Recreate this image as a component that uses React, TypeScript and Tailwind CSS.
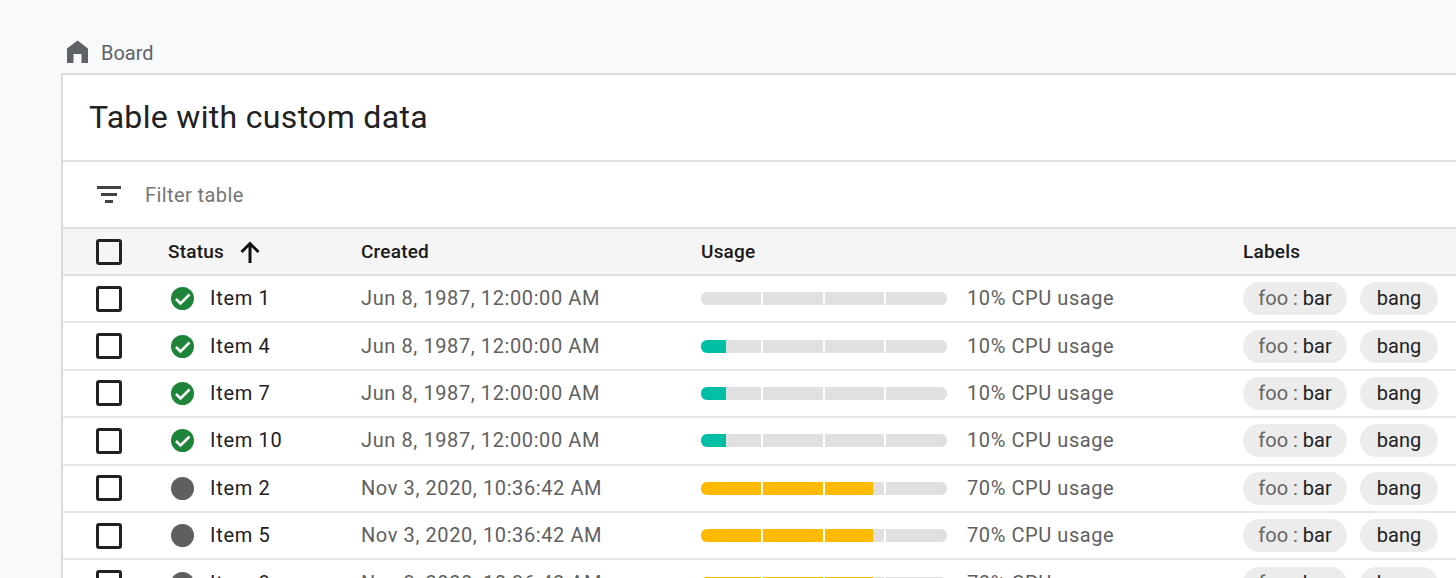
const rows = [
  { name: "Item 1", done: true, created: "Jun 8, 1987, 12:00:00 AM", usage: 0, text: "10% CPU usage" },
  { name: "Item 4", done: true, created: "Jun 8, 1987, 12:00:00 AM", usage: 10, text: "10% CPU usage" },
  { name: "Item 7", done: true, created: "Jun 8, 1987, 12:00:00 AM", usage: 10, text: "10% CPU usage" },
  { name: "Item 10", done: true, created: "Jun 8, 1987, 12:00:00 AM", usage: 10, text: "10% CPU usage" },
  { name: "Item 2", done: false, created: "Nov 3, 2020, 10:36:42 AM", usage: 70, text: "70% CPU usage" },
  { name: "Item 5", done: false, created: "Nov 3, 2020, 10:36:42 AM", usage: 70, text: "70% CPU usage" },
  { name: "Item 8", done: false, created: "Nov 3, 2020, 10:36:42 AM", usage: 70, text: "70% CPU usage" },
];

const columns = "grid grid-cols-[105px_193px_340px_542px_1fr] items-center";

function Checkbox() {
  return <div className="ml-[33px] size-[26px] rounded-[3px] border-[3px] border-[#212121]" />;
}

function StatusIcon({ done }: { done: boolean }) {
  if (!done) return <div className="size-[23px] rounded-full bg-[#5f5f5f]" />;
  return (
    <svg viewBox="0 0 23 23" className="size-[23px]">
      <circle cx="11.5" cy="11.5" r="11.5" fill="#1e8439" />
      <path d="M5 12l4.5 4.5L18.5 7.5" fill="none" stroke="#fff" strokeWidth="2.6" />
    </svg>
  );
}

function UsageBar({ value }: { value: number }) {
  return (
    <div className="relative h-[13px] w-[246px] overflow-hidden rounded-[6px] bg-[#e0e0e0]">
      <div
        className={`h-full ${value > 50 ? "bg-[#ffba00]" : "bg-[#00bfa5]"}`}
        style={{ width: `${value}%` }}
      />
      <div className="absolute inset-0 flex">
        <div className="w-[62px] border-r-2 border-white" />
        <div className="w-[62px] border-r-2 border-white" />
        <div className="w-[61px] border-r-2 border-white" />
      </div>
    </div>
  );
}

function Chip({ children, className }: { children: React.ReactNode; className: string }) {
  return (
    <span className={`flex h-[33px] items-center justify-center rounded-full bg-[#ececec] pb-px text-[#212121] ${className}`}>
      {children}
    </span>
  );
}

export default function App() {
  return (
    <div className="h-[578px] overflow-hidden bg-[#f8f9fb] pl-[61px] pt-[36px] font-['Roboto',sans-serif]">
      <div className="flex h-[37px] items-start gap-[13px] pl-[6px] text-[20px] text-[#5f6368]">
        <svg viewBox="0 0 21 23" className="mt-[4px] h-[23px] w-[21px]" fill="#5f6368">
          <path d="M10.5 0.5L21 8.5V23H14.5V14H6.5V23H0V8.5z" />
        </svg>
        <span className="leading-[34px]">Board</span>
      </div>

      <div className="w-[1420px] border-l-2 border-t-2 border-[#dadae0] bg-white">
        <h1 className="flex h-[87px] items-center border-b-2 border-[#e0e0e0] pb-[2px] pl-[26px] text-[32px] tracking-[0.32px] text-[#212121]">
          Table with custom data
        </h1>

        <div className="flex h-[65px] items-center gap-[24px] pl-[34px] text-[20px] tracking-[0.42px] text-[#757575]">
          <svg viewBox="0 0 24 18" className="h-[18px] w-[24px]" fill="#424242">
            <rect x="0" y="0" width="24" height="3" />
            <rect x="4" y="7" width="16" height="3" />
            <rect x="8" y="14" width="8" height="3" />
          </svg>
          Filter table
        </div>

        <div className={`${columns} h-[49px] border-y-2 border-[#e0e0e0] bg-[#f5f5f5] text-[19px] font-medium tracking-[0.2px] text-[#1a1a1a]`}>
          <Checkbox />
          <div className="flex items-center gap-[16px]">
            <span className="pt-[2px]">Status</span>
            <svg viewBox="0 0 20 22" className="h-[22px] w-[20px]" fill="none" stroke="#111" strokeWidth="3">
              <path d="M10 22V3M1.5 11L10 2.5 18.5 11" />
            </svg>
          </div>
          <div className="pt-[2px]">Created</div>
          <div className="pt-[2px]">Usage</div>
          <div className="pt-[2px]">Labels</div>
        </div>

        {rows.map((row) => (
          <div
            key={row.name}
            className={`${columns} h-[47.4px] border-b-2 border-[#e6e6e6] text-[20px]`}
          >
            <Checkbox />
            <div className="flex items-center gap-[16px] pl-[3px] text-[#212121]">
              <StatusIcon done={row.done} />
              <span className="pb-px tracking-[0.7px]">{row.name}</span>
            </div>
            <div className="pb-px tracking-[0.6px] text-[#5f5f5f]">{row.created}</div>
            <div className="flex items-center gap-[20px] text-[#5f5f5f]">
              <UsageBar value={row.usage} />
              <span className="pb-px tracking-[0.58px]">{row.text}</span>
            </div>
            <div className="flex gap-[13px]">
              <Chip className="w-[104px] gap-[5px]">
                <span className="text-[#666666]">foo :</span> bar
              </Chip>
              <Chip className="w-[78px]">bang</Chip>
            </div>
          </div>
        ))}
      </div>
    </div>
  );
}
